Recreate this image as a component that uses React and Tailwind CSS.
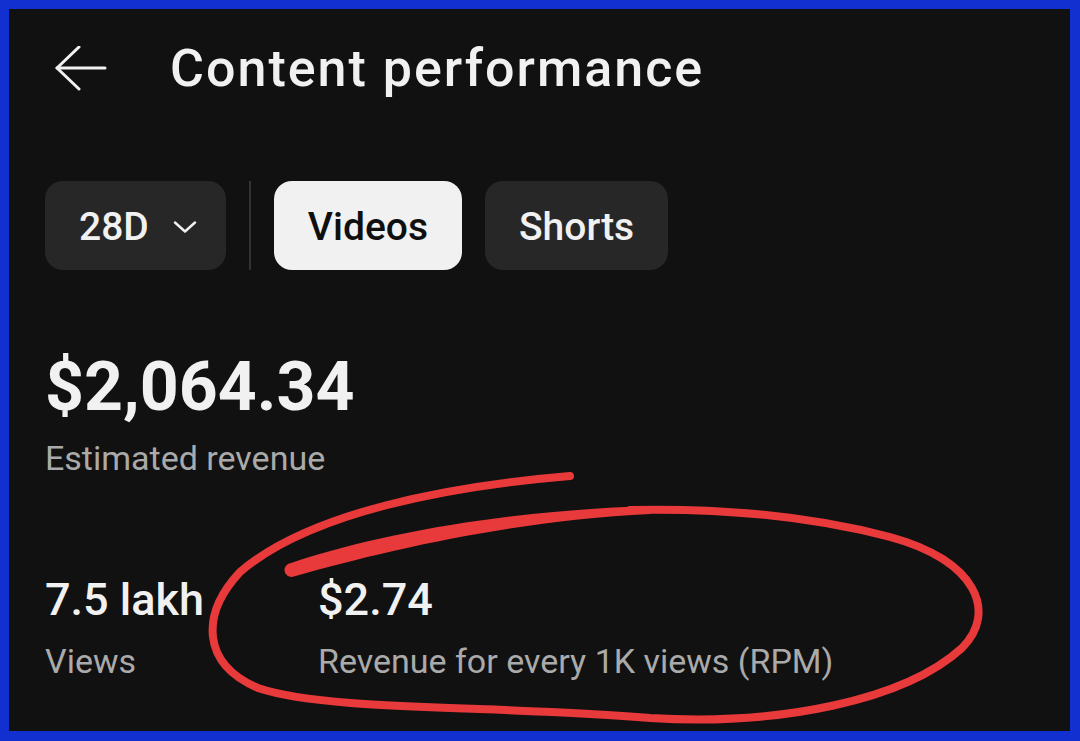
import React from 'react';

const font = { fontFamily: 'Roboto, "Noto Sans", sans-serif' };

function BackArrow() {
  return (
    <svg width="52" height="46" viewBox="0 0 52 46" fill="none" stroke="#f1f1f1" strokeWidth="3" strokeLinecap="round" strokeLinejoin="round">
      <path d="M2 22 H50" />
      <path d="M24 1 L2 22 L24 43" />
    </svg>
  );
}

function Chevron() {
  return (
    <svg width="24" height="12" viewBox="0 0 24 12" fill="none" stroke="#f1f1f1" strokeWidth="2.4" strokeLinecap="round" strokeLinejoin="round">
      <path d="M2 1.5 L12 10.5 L22 1.5" />
    </svg>
  );
}

// hand-drawn red circle around the RPM stat
function Scribble() {
  return (
    <svg className="absolute inset-0 pointer-events-none" width="1080" height="741" viewBox="0 0 1080 741" fill="none" strokeLinecap="round" strokeLinejoin="round">
      <path
        d="M570 476 C450 486 310 512 240 572 C200 615 202 664 258 688 C330 712 500 705 650 718 C780 726 905 700 962 648 C998 612 976 560 890 537 C810 516 720 508 630 510"
        stroke="#e8393b"
        strokeWidth="8"
      />
      <path
        d="M650 506 C520 510 390 530 291 563 A7 7 0 0 0 292 577 C390 549 520 520 650 514 Z"
        fill="#e8393b"
      />
    </svg>
  );
}

export default function App() {
  return (
    <div className="relative w-full h-screen bg-[#1230cf] pl-[9px] pt-[9px] pr-[10px] pb-[10px]" style={font}>
      <div className="w-full h-full bg-[#111111] pl-[36px] overflow-hidden">
        <div className="h-[120px] flex items-center">
          <div className="ml-[10px]">
            <BackArrow />
          </div>
          <h1 className="ml-[63px] text-[52px] tracking-[2px] font-medium text-[#f1f1f1] leading-none">Content performance</h1>
        </div>

        <div className="mt-[52px] flex items-center h-[89px]">
          <div className="h-full flex items-center gap-[24px] pl-[34px] pr-[29px] pt-[3px] rounded-[18px] bg-[#272727] text-[#f1f1f1] text-[39px] font-medium">
            <span>28D</span>
            <Chevron />
          </div>
          <div className="mx-[23px] w-[2px] h-full bg-[#333333]" />
          <div className="h-full flex items-center px-[34px] pt-[3px] rounded-[18px] bg-[#f1f1f1] text-[#0f0f0f] text-[39px] font-medium">Videos</div>
          <div className="ml-[23px] h-full flex items-center px-[34px] pt-[3px] rounded-[18px] bg-[#272727] text-[#f1f1f1] text-[39px] font-medium">Shorts</div>
        </div>

        <div className="mt-[83px] text-[68px] leading-none font-bold text-[#f1f1f1]">$2,064.34</div>
        <div className="mt-[20px] text-[34px] leading-none text-[#aaaaaa]">Estimated revenue</div>

        <div className="mt-[102px] flex">
          <div className="w-[273px]">
            <div className="text-[45px] leading-none font-medium text-[#f1f1f1]">7.5 lakh</div>
            <div className="mt-[22px] text-[34px] leading-none text-[#aaaaaa]">Views</div>
          </div>
          <div>
            <div className="text-[45px] leading-none font-medium text-[#f1f1f1]">$2.74</div>
            <div className="mt-[22px] text-[34px] leading-none text-[#aaaaaa]">Revenue for every 1K views (RPM)</div>
          </div>
        </div>
      </div>
      <Scribble />
    </div>
  );
}
